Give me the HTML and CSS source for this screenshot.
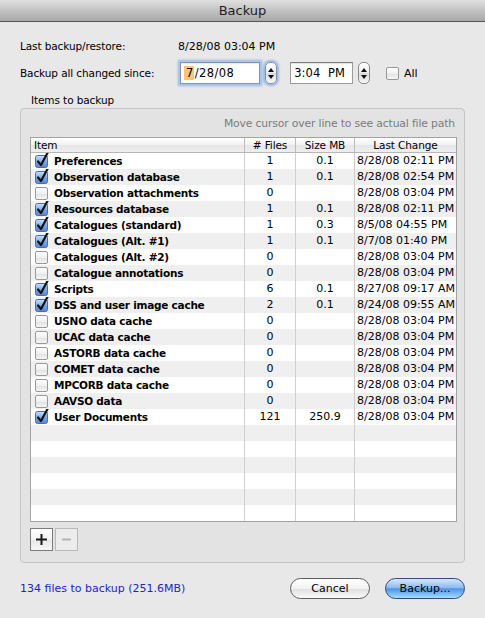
FILE: index.html
```html
<!DOCTYPE html>
<html>
<head>
<meta charset="utf-8">
<link rel="stylesheet" href="styles.css">
</head>
<body>
<svg width="0" height="0" class="defs">
  <defs>
    <linearGradient id="cbblue" x1="0" y1="0" x2="0" y2="1">
      <stop offset="0" stop-color="#cfe0f6"/>
      <stop offset="0.5" stop-color="#7eaae6"/>
      <stop offset="1" stop-color="#4f86d4"/>
    </linearGradient>
    <symbol id="chk" viewBox="0 0 14 16">
      <rect x="0.5" y="3.5" width="12" height="12" rx="2" fill="url(#cbblue)" stroke="#4a6fa6"/>
      <path d="M3 9.5 L6 13 L12.5 1" fill="none" stroke="#111" stroke-width="2.2" stroke-linecap="round" stroke-linejoin="round"/>
    </symbol>
  </defs>
</svg>
<div class="window">
  <div class="titlebar">Backup</div>
  <div class="content">
    <div class="row row1">
      <span class="label">Last backup/restore:</span>
      <span class="value">8/28/08 03:04 PM</span>
    </div>
    <div class="row row2">
      <span class="label">Backup all changed since:</span>
      <div class="field datefield focus"><span class="sel">7</span>/28/08</div>
      <div class="stepper focus-s"><span class="up"></span><span class="dn"></span></div>
      <div class="field timefield">3:04&nbsp; PM</div>
      <div class="stepper"><span class="up"></span><span class="dn"></span></div>
      <span class="cb allcb"></span>
      <span class="all">All</span>
    </div>
    <div class="grouplabel">Items to backup</div>
    <div class="group">
      <div class="hint">Move cursor over line to see actual file path</div>
      <div class="table">
        <div class="thead">
          <div class="c c1">Item</div>
          <div class="c c2">#&nbsp;Files</div>
          <div class="c c3">Size MB</div>
          <div class="c c4">Last Change</div>
        </div>
        <div class="tr"><div class="c c1"><svg class="cbs"><use href="#chk"/></svg><b>Preferences</b></div><div class="c c2">1</div><div class="c c3">0.1</div><div class="c c4">8/28/08 02:11 PM</div></div>
        <div class="tr"><div class="c c1"><svg class="cbs"><use href="#chk"/></svg><b>Observation database</b></div><div class="c c2">1</div><div class="c c3">0.1</div><div class="c c4">8/28/08 02:54 PM</div></div>
        <div class="tr"><div class="c c1"><span class="cb"></span><b>Observation attachments</b></div><div class="c c2">0</div><div class="c c3"></div><div class="c c4">8/28/08 03:04 PM</div></div>
        <div class="tr"><div class="c c1"><svg class="cbs"><use href="#chk"/></svg><b>Resources database</b></div><div class="c c2">1</div><div class="c c3">0.1</div><div class="c c4">8/28/08 02:11 PM</div></div>
        <div class="tr"><div class="c c1"><svg class="cbs"><use href="#chk"/></svg><b>Catalogues (standard)</b></div><div class="c c2">1</div><div class="c c3">0.3</div><div class="c c4">8/5/08 04:55 PM</div></div>
        <div class="tr"><div class="c c1"><svg class="cbs"><use href="#chk"/></svg><b>Catalogues (Alt. #1)</b></div><div class="c c2">1</div><div class="c c3">0.1</div><div class="c c4">8/7/08 01:40 PM</div></div>
        <div class="tr"><div class="c c1"><span class="cb"></span><b>Catalogues (Alt. #2)</b></div><div class="c c2">0</div><div class="c c3"></div><div class="c c4">8/28/08 03:04 PM</div></div>
        <div class="tr"><div class="c c1"><span class="cb"></span><b>Catalogue annotations</b></div><div class="c c2">0</div><div class="c c3"></div><div class="c c4">8/28/08 03:04 PM</div></div>
        <div class="tr"><div class="c c1"><svg class="cbs"><use href="#chk"/></svg><b>Scripts</b></div><div class="c c2">6</div><div class="c c3">0.1</div><div class="c c4">8/27/08 09:17 AM</div></div>
        <div class="tr"><div class="c c1"><svg class="cbs"><use href="#chk"/></svg><b>DSS and user image cache</b></div><div class="c c2">2</div><div class="c c3">0.1</div><div class="c c4">8/24/08 09:55 AM</div></div>
        <div class="tr"><div class="c c1"><span class="cb"></span><b>USNO data cache</b></div><div class="c c2">0</div><div class="c c3"></div><div class="c c4">8/28/08 03:04 PM</div></div>
        <div class="tr"><div class="c c1"><span class="cb"></span><b>UCAC data cache</b></div><div class="c c2">0</div><div class="c c3"></div><div class="c c4">8/28/08 03:04 PM</div></div>
        <div class="tr"><div class="c c1"><span class="cb"></span><b>ASTORB data cache</b></div><div class="c c2">0</div><div class="c c3"></div><div class="c c4">8/28/08 03:04 PM</div></div>
        <div class="tr"><div class="c c1"><span class="cb"></span><b>COMET data cache</b></div><div class="c c2">0</div><div class="c c3"></div><div class="c c4">8/28/08 03:04 PM</div></div>
        <div class="tr"><div class="c c1"><span class="cb"></span><b>MPCORB data cache</b></div><div class="c c2">0</div><div class="c c3"></div><div class="c c4">8/28/08 03:04 PM</div></div>
        <div class="tr"><div class="c c1"><span class="cb"></span><b>AAVSO data</b></div><div class="c c2">0</div><div class="c c3"></div><div class="c c4">8/28/08 03:04 PM</div></div>
        <div class="tr"><div class="c c1"><svg class="cbs"><use href="#chk"/></svg><b>User Documents</b></div><div class="c c2">121</div><div class="c c3">250.9</div><div class="c c4">8/28/08 03:04 PM</div></div>
        <div class="tr"><div class="c c1"></div><div class="c c2"></div><div class="c c3"></div><div class="c c4"></div></div>
        <div class="tr"><div class="c c1"></div><div class="c c2"></div><div class="c c3"></div><div class="c c4"></div></div>
        <div class="tr"><div class="c c1"></div><div class="c c2"></div><div class="c c3"></div><div class="c c4"></div></div>
        <div class="tr"><div class="c c1"></div><div class="c c2"></div><div class="c c3"></div><div class="c c4"></div></div>
        <div class="tr"><div class="c c1"></div><div class="c c2"></div><div class="c c3"></div><div class="c c4"></div></div>
        <div class="tr"><div class="c c1"></div><div class="c c2"></div><div class="c c3"></div><div class="c c4"></div></div>
      </div>
      <div class="pm">
        <div class="sqbtn"><svg width="13" height="13" viewBox="0 0 13 13"><path d="M6.5 1 V12 M1 6.5 H12" stroke="#1a1a1a" stroke-width="2"/></svg></div>
        <div class="sqbtn disabled"><svg width="13" height="13" viewBox="0 0 13 13"><path d="M2 6.5 H11" stroke="#b4b4b4" stroke-width="2"/></svg></div>
      </div>
    </div>
    <div class="footer">
      <span class="status">134 files to backup (251.6MB)</span>
      <div class="btn cancel">Cancel</div>
      <div class="btn default">Backup...</div>
    </div>
  </div>
</div>
</body>
</html>
```

FILE: styles.css
```css
* { box-sizing: border-box; }
html, body { margin: 0; padding: 0; }
body {
  width: 485px;
  height: 618px;
  background: #e8e8e8;
  font-family: "DejaVu Sans", "Liberation Sans", sans-serif;
  font-size: 10.5px;
  letter-spacing: -0.1px;
  color: #000;
  overflow: hidden;
}
.defs { position: absolute; width: 0; height: 0; }
.window { width: 485px; height: 618px; }
.titlebar {
  height: 22px;
  background: linear-gradient(#e0e0e0, #c2c2c2 50%, #a8a8a8);
  border-bottom: 1px solid #555;
  text-align: center;
  font-size: 13px;
  letter-spacing: 0;
  line-height: 21px;
  color: #1e1e1e;
}
.content { padding: 0 20px; }
.row { display: flex; align-items: center; }
.row1 { height: 16px; margin-top: 16px; }
.label { width: 158px; flex: none; }
.value { font-size: 11px; letter-spacing: 0; }
.row2 { height: 24px; margin-top: 7px; }
.field {
  height: 22px;
  background: #fff;
  border: 1px solid #9b9b9b;
  border-top-color: #7c7c7c;
  box-shadow: inset 0 1px 1px rgba(0,0,0,0.12);
  display: flex;
  align-items: center;
  font-size: 11.5px;
  letter-spacing: 0.4px;
}
.datefield {
  width: 80px;
  margin-left: 2px;
  padding-left: 3px;
  border-color: #7f95b8;
}
.focus {
  box-shadow: 0 0 0 1px #a9c4ea, 0 0 2px 2px rgba(125,165,225,0.75), inset 0 1px 1px rgba(0,0,0,0.1);
}
.sel { background: #fcc57a; padding: 0 0 0 2px; margin-right: 1px; }
.stepper {
  width: 12px;
  height: 22px;
  margin-left: 5px;
  border: 1px solid #8a8a8a;
  border-radius: 5px;
  background: linear-gradient(#ffffff, #ececec 50%, #dadada 50%, #f6f6f6);
  display: flex;
  flex-direction: column;
  align-items: center;
  justify-content: center;
  gap: 3px;
}
.focus-s { box-shadow: 0 0 2px 2px rgba(125,165,225,0.7); border-color: #7f95b8; }
.stepper .up { width: 0; height: 0; border-left: 3px solid transparent; border-right: 3px solid transparent; border-bottom: 4px solid #111; }
.stepper .dn { width: 0; height: 0; border-left: 3px solid transparent; border-right: 3px solid transparent; border-top: 4px solid #111; }
.timefield {
  width: 63px;
  margin-left: 13px;
  justify-content: flex-end;
  padding-right: 7px;
  letter-spacing: 0.1px;
}
.cb {
  display: inline-block;
  width: 13px;
  height: 13px;
  border: 1px solid #989898;
  border-radius: 2px;
  background: linear-gradient(#ffffff, #f0f0f0 50%, #e2e2e2 55%, #f6f6f6);
  flex: none;
}
.allcb { margin-left: 16px; }
.all { margin-left: 5px; font-size: 11px; }
.grouplabel { margin-top: 8px; padding-left: 11px; line-height: 14px; height: 14px; }
.group {
  margin-top: 1px;
  height: 455px;
  border: 1px solid #c4c4c4;
  border-radius: 4px;
  background: #e3e3e3;
  padding: 8px 8px 0 9px;
}
.hint { text-align: right; color: #7b7b7b; line-height: 14px; height: 14px; padding-right: 1px; font-size: 10.8px; letter-spacing: -0.15px; }
.table {
  margin-top: 6px;
  width: 427px;
  border: 1px solid #a3a3a3;
  background: #fff;
}
.thead, .tr {
  display: grid;
  grid-template-columns: 213px 51px 59px 1fr;
}
.thead {
  height: 15px;
  background: linear-gradient(#ffffff, #f1f1f1 50%, #e6e6e6 51%, #eeeeee);
  border-bottom: 1px solid #b7b7b7;
  line-height: 14px;
}
.tr { height: 16px; line-height: 16px; }
.tr:nth-child(odd) { background: #efefef; }
.c { white-space: nowrap; overflow: hidden; }
.c + .c { border-left: 1px solid #cfcfcf; }
.thead .c + .c { border-left-color: #bcbcbc; }
.thead .c1 { padding-left: 3px; }
.c2, .c3 { text-align: center; }
.tr .c2, .tr .c3, .tr .c4 { font-size: 11px; letter-spacing: 0; }
.c4 { padding-left: 2px; }
.thead .c4 { text-align: center; padding-left: 0; }
.tr .c1 { display: flex; align-items: center; padding-left: 4px; }
.tr .c1 .cb { margin-right: 6px; }
.cbs { width: 14px; height: 16px; margin-right: 5px; margin-top: -3px; flex: none; overflow: visible; }
.tr b { font-weight: bold; letter-spacing: -0.25px; }
.pm { display: flex; gap: 2px; margin-top: 6px; margin-left: 0; }
.sqbtn {
  width: 23px;
  height: 23px;
  border: 1px solid #7c7c7c;
  background: linear-gradient(#ffffff, #f3f3f3 50%, #e8e8e8 51%, #f7f7f7);
  display: flex;
  align-items: center;
  justify-content: center;
}
.sqbtn.disabled { border-color: #b9b9b9; background: #ececec; }
.footer { display: flex; align-items: center; margin-top: 14px; height: 23px; }
.status { color: #2323c4; flex: 1; font-size: 11px; letter-spacing: 0; }
.btn {
  width: 80px;
  height: 21px;
  border-radius: 11px;
  text-align: center;
  line-height: 19px;
  font-size: 11px;
  letter-spacing: 0;
}
.cancel {
  border: 1px solid #5e5e5e;
  background: linear-gradient(#ffffff, #f2f2f2 50%, #e0e0e0 55%, #fafafa);
}
.default {
  margin-left: 15px;
  border: 1px solid #2f4c7c;
  background: linear-gradient(#d6e8fc, #8ebcf0 45%, #4f95e6 52%, #7fbdf7 80%, #a9dcff);
}
```
